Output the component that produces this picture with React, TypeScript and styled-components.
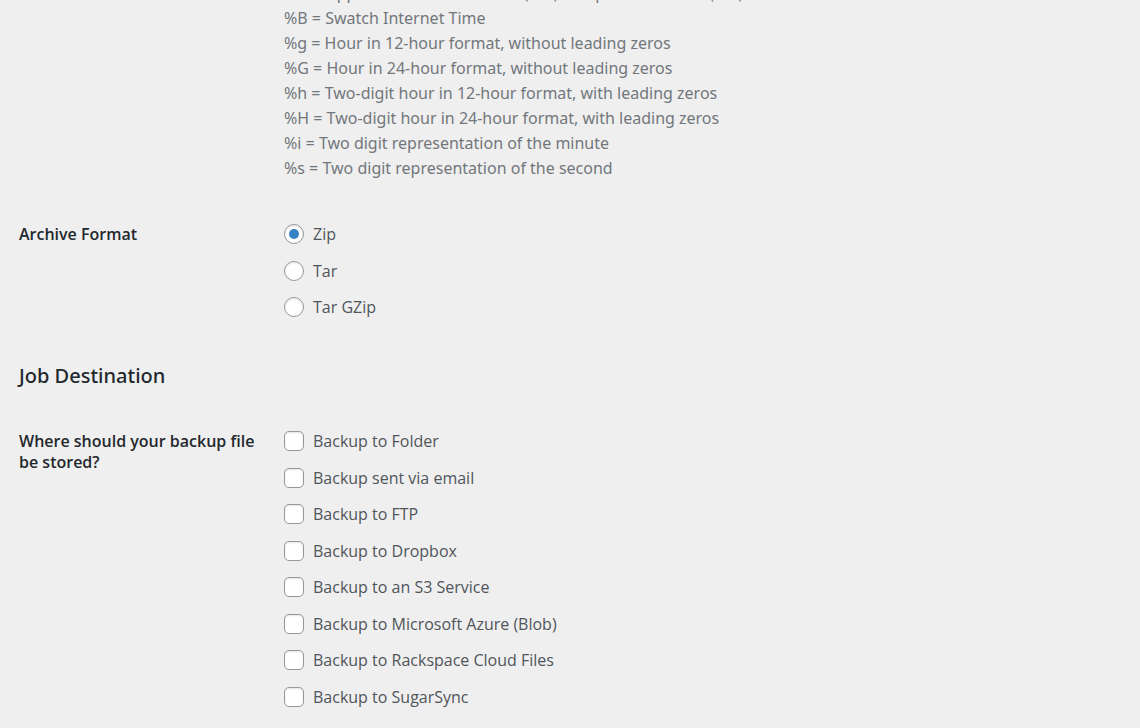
import React from "react";
import styled, { createGlobalStyle } from "styled-components";

const GlobalStyle = createGlobalStyle`
  *, *::before, *::after { box-sizing: border-box; }
  body {
    margin: 0;
    background: #efefef;
    color: #50555b;
    font-family: "Segoe UI", "Open Sans", "Noto Sans", sans-serif;
    font-size: 16px;
    line-height: 20px;
  }
`;

const Page = styled.main`
  display: flow-root;
  overflow: hidden;
  padding: 0 19px 20px;
`;

const Row = styled.div<{ $top: number }>`
  display: grid;
  grid-template-columns: 240px minmax(0, 1fr);
  column-gap: 25px;
  margin: ${(p) => p.$top}px 0 0;
`;

const Heading = styled.h3`
  margin: 0;
  color: #23282d;
  font-size: 16px;
  font-weight: 600;
  line-height: 21px;
`;

const SectionTitle = styled.h2`
  margin: 46px 0 0;
  color: #23282d;
  font-family: "Segoe UI", "Noto Sans", "Open Sans", sans-serif;
  font-size: 20px;
  font-weight: 500;
  line-height: 26px;
`;

const Legend = styled.ul`
  grid-column: 2;
  margin: 0;
  padding: 0;
  list-style: none;
  color: #72777c;
  font-family: "Segoe UI", "Noto Sans", "Open Sans", sans-serif;
  line-height: 25px;
`;

const Options = styled.div<{ $height: number }>`
  display: flex;
  flex-direction: column;
  justify-content: space-between;
  align-items: flex-start;
  min-height: ${(p) => p.$height}px;
`;

const Option = styled.label`
  display: flex;
  align-items: center;
  gap: 9px;
  height: 20px;
`;

const Choice = styled.input`
  appearance: none;
  display: grid;
  place-items: center;
  flex: none;
  width: 20px;
  height: 20px;
  margin: 0;
  border: 1px solid #94979b;
  border-radius: 5px;
  background: #fff;
  box-shadow: inset 0 1px 2px rgba(0, 0, 0, 0.1);

  &[type="radio"] {
    border-radius: 50%;
  }

  &:checked::before {
    content: "";
    width: 10px;
    height: 10px;
    border-radius: inherit;
    background: #3582c4;
  }
`;

const placeholders = [
  "%A = Uppercase ante meridiem (AM) and post meridiem (PM)",
  "%B = Swatch Internet Time",
  "%g = Hour in 12-hour format, without leading zeros",
  "%G = Hour in 24-hour format, without leading zeros",
  "%h = Two-digit hour in 12-hour format, with leading zeros",
  "%H = Two-digit hour in 24-hour format, with leading zeros",
  "%i = Two digit representation of the minute",
  "%s = Two digit representation of the second",
];

const formats = ["Zip", "Tar", "Tar GZip"];

const destinations = [
  "Backup to Folder",
  "Backup sent via email",
  "Backup to FTP",
  "Backup to Dropbox",
  "Backup to an S3 Service",
  "Backup to Microsoft Azure (Blob)",
  "Backup to Rackspace Cloud Files",
  "Backup to SugarSync",
];

export default function App() {
  return (
    <>
      <GlobalStyle />
      <Page>
        <Row $top={-19}>
          <Legend>
            {placeholders.map((text) => (
              <li key={text}>{text}</li>
            ))}
          </Legend>
        </Row>
        <Row $top={43} role="radiogroup" aria-labelledby="archive-format">
          <Heading id="archive-format">Archive Format</Heading>
          <Options $height={93}>
            {formats.map((name, i) => (
              <Option key={name}>
                <Choice type="radio" name="format" value={name} defaultChecked={i === 0} />
                {name}
              </Option>
            ))}
          </Options>
        </Row>
        <SectionTitle>Job Destination</SectionTitle>
        <Row $top={42} role="group" aria-labelledby="destination">
          <Heading id="destination">Where should your backup file be stored?</Heading>
          <Options $height={276}>
            {destinations.map((name) => (
              <Option key={name}>
                <Choice type="checkbox" name="destination" value={name} />
                {name}
              </Option>
            ))}
          </Options>
        </Row>
      </Page>
    </>
  );
}
